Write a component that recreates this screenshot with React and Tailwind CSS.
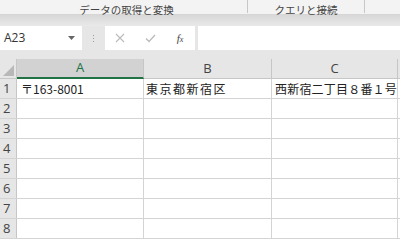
import React from "react";

const rows = [1, 2, 3, 4, 5, 6, 7, 8];
const cellFont = { fontFamily: '"Noto Sans CJK JP", "Noto Sans", sans-serif' };

export default function App() {
  return (
    <div className="w-[400px] h-[241px] overflow-hidden bg-[#e6e6e6] flex flex-col" style={{ fontFamily: '"Noto Sans CJK JP", "Noto Sans", sans-serif' }}>
      {/* ribbon group labels */}
      <div className="h-[15px] bg-[#f3f3f3] border-b border-[#d6d6d6] flex text-[10.5px] text-[#444] leading-[14px]">
        <div className="w-[247px] text-center pl-[6px] pt-[3px] whitespace-nowrap">データの取得と変換</div>
        <div className="w-[117px] h-[13px] border-l border-[#c8c8c8] text-center pt-[3px] whitespace-nowrap">クエリと接続</div>
        <div className="flex-1 h-[13px] border-l border-[#c8c8c8]"></div>
      </div>
      {/* gray band */}
      <div className="h-[11px] bg-gradient-to-b from-[#d8d8d8] to-[#e9e9e9]"></div>
      {/* formula bar */}
      <div className="h-[24px] flex items-stretch bg-[#e6e6e6]">
        <div className="w-[82px] bg-white flex items-center justify-between pl-[4px] pr-[7px]">
          <span className="text-[12px] text-[#333]" style={{ fontFamily: '"Open Sans", sans-serif' }}>A23</span>
          <svg width="7" height="4" viewBox="0 0 7 4"><path d="M0 0h7L3.5 4z" fill="#666" /></svg>
        </div>
        <div className="w-[23px] flex items-center justify-center">
          <div className="flex flex-col gap-[2px]">
            <div className="w-[1px] h-[1px] bg-[#999]"></div>
            <div className="w-[1px] h-[1px] bg-[#999]"></div>
            <div className="w-[1px] h-[1px] bg-[#999]"></div>
          </div>
        </div>
        <div className="w-[90px] bg-white flex items-center">
          <div className="w-[30px] flex justify-center">
            <svg width="10" height="10" viewBox="0 0 10 10"><path d="M1 1L9 9M9 1L1 9" stroke="#bbb" strokeWidth="1.1" /></svg>
          </div>
          <div className="w-[30px] flex justify-center">
            <svg width="11" height="9" viewBox="0 0 11 9"><path d="M1 4.5L4 7.5L10 1" stroke="#bbb" strokeWidth="1.3" fill="none" /></svg>
          </div>
          <div className="w-[30px] flex justify-center">
            <span className="text-[11px] italic text-[#444]" style={{ fontFamily: '"Liberation Serif", serif' }}>f<span className="text-[8px]">x</span></span>
          </div>
        </div>
        <div className="w-[3px]"></div>
        <div className="flex-1 bg-white"></div>
      </div>
      <div className="h-[9px]"></div>
      {/* grid */}
      <div className="flex-1 bg-white flex flex-col">
        <div className="h-[20px] shrink-0 flex bg-[#e6e6e6] border-b border-[#c6c6c6] text-[13px] text-[#444]" style={{ fontFamily: '"Open Sans", sans-serif' }}>
          <div className="w-[17px] relative border-r border-[#c6c6c6]">
            <svg className="absolute right-[2px] bottom-[2px]" width="11" height="11" viewBox="0 0 11 11"><path d="M11 0V11H0z" fill="#b8b8b8" /></svg>
          </div>
          <div className="w-[127px] bg-[#d2d2d2] border-r border-[#c6c6c6] border-b-2 border-b-[#217346] -mb-px flex items-center justify-center text-[#217346]">A</div>
          <div className="w-[128px] border-r border-[#c6c6c6] flex items-center justify-center">B</div>
          <div className="w-[126px] border-r border-[#c6c6c6] flex items-center justify-center">C</div>
          <div className="flex-1"></div>
        </div>
        {rows.map((r) => (
          <div key={r} className="h-[20px] shrink-0 flex border-b border-[#d4d4d4]">
            <div className="w-[17px] bg-[#e6e6e6] border-r border-[#c6c6c6] text-[13px] text-[#444] flex items-center pl-[3px]" style={{ fontFamily: '"Open Sans", sans-serif' }}>{r}</div>
            <div className="w-[127px] border-r border-[#d4d4d4] flex items-center pl-[4px] text-[12px] text-[#222] whitespace-nowrap" style={cellFont}>{r === 1 ? "〒163-8001" : ""}</div>
            <div className="w-[128px] border-r border-[#d4d4d4] flex items-center pl-[2px] text-[12px] text-[#222] tracking-[1.5px] whitespace-nowrap" style={cellFont}>{r === 1 ? "東京都新宿区" : ""}</div>
            <div className="w-[126px] border-r border-[#d4d4d4] flex items-center pl-[3px] text-[12px] text-[#222] tracking-[0.2px] whitespace-nowrap overflow-hidden" style={cellFont}>{r === 1 ? "西新宿二丁目８番１号" : ""}</div>
            <div className="flex-1"></div>
          </div>
        ))}
      </div>
    </div>
  );
}
